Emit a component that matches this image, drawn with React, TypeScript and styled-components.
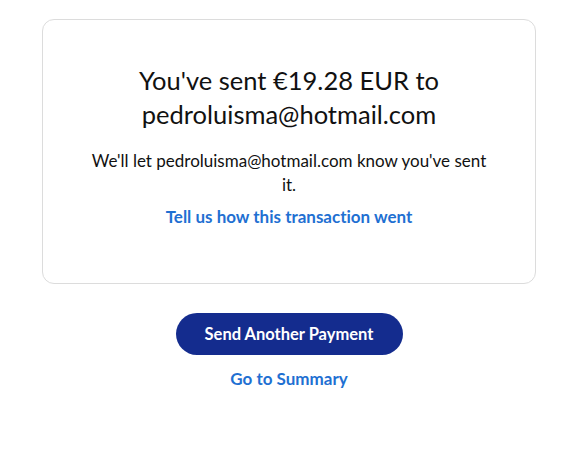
import styled, { createGlobalStyle } from "styled-components";

const Global = createGlobalStyle`
  body {
    margin: 0;
    background: #fff;
    font-family: Lato, "Open Sans", sans-serif;
    font-variant-ligatures: none;
    color: #111;
  }
`;

const Page = styled.div`
  display: flex;
  flex-direction: column;
  align-items: center;
  padding: 19px 39px 0 42px;
`;

const Card = styled.div`
  width: 100%;
  box-sizing: border-box;
  border: 1px solid #dcdcdc;
  border-radius: 12px;
  padding: 43px 24px 54px;
  display: flex;
  flex-direction: column;
  align-items: center;
  text-align: center;
`;

const Title = styled.h1`
  margin: 0;
  max-width: 330px;
  font-size: 25.5px;
  line-height: 34px;
  font-weight: 400;
  color: #111;
`;

const Note = styled.p`
  margin: 18px 0 8px;
  max-width: 396px;
  font-size: 17px;
  line-height: 24px;
  color: #111;
`;

const TextLink = styled.a`
  font-size: 17px;
  line-height: 24px;
  font-weight: 700;
  color: #1f70d2;
  text-decoration: none;
  cursor: pointer;
`;

const Actions = styled.div`
  display: flex;
  flex-direction: column;
  align-items: center;
  gap: 12px;
  margin-top: 29px;
`;

const PrimaryButton = styled.button`
  width: 227px;
  height: 42px;
  border: none;
  border-radius: 21px;
  background: #142c8e;
  color: #fff;
  font-family: inherit;
  font-size: 16.5px;
  font-weight: 700;
  cursor: pointer;
`;

export default function App() {
  return (
    <>
      <Global />
      <Page>
        <Card>
          <Title>You've sent €19.28 EUR to pedroluisma@hotmail.com</Title>
          <Note>We'll let pedroluisma@hotmail.com know you've sent it.</Note>
          <TextLink>Tell us how this transaction went</TextLink>
        </Card>
        <Actions>
          <PrimaryButton>Send Another Payment</PrimaryButton>
          <TextLink>Go to Summary</TextLink>
        </Actions>
      </Page>
    </>
  );
}
